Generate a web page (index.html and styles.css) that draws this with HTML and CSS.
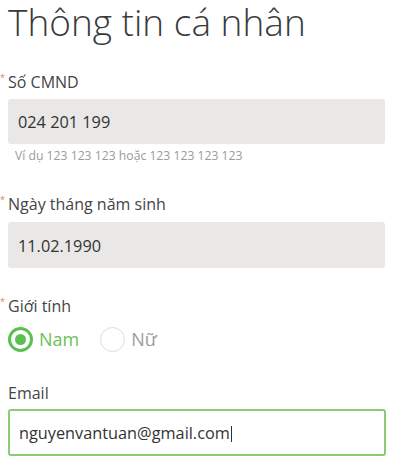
FILE: index.html
```html
<!DOCTYPE html>
<html lang="vi">
<head>
<meta charset="utf-8">
<title>Thông tin cá nhân</title>
<link rel="stylesheet" href="styles.css">
</head>
<body>
<div class="form">
  <h1 class="title">Thông tin cá nhân</h1>

  <div class="label label-1"><span class="req">*</span>Số CMND</div>
  <div class="field field-1">024 201 199</div>
  <div class="hint">Ví dụ 123 123 123 hoặc 123 123 123 123</div>

  <div class="label label-2"><span class="req">*</span>Ngày tháng năm sinh</div>
  <div class="field field-2">11.02.1990</div>

  <div class="label label-3"><span class="req">*</span>Giới tính</div>
  <div class="radios">
    <div class="radio checked"><span class="dot"></span><span class="rtext">Nam</span></div>
    <div class="radio"><span class="dot"></span><span class="rtext">Nữ</span></div>
  </div>

  <div class="label label-4 plain">Email</div>
  <div class="field field-email">nguyenvantuan@gmail.com<span class="caret"></span></div>
</div>
</body>
</html>
```

FILE: styles.css
```css
html, body {
  margin: 0;
  padding: 0;
  background: #ffffff;
}

body {
  font-family: "Open Sans", "Noto Sans", sans-serif;
  color: #333;
}

.form {
  display: flex;
  flex-direction: column;
  align-items: flex-start;
  padding-left: 8px;
}

.title {
  margin: 0;
  font-size: 37px;
  line-height: 44px;
  height: 44px;
  font-weight: 300;
  color: #3a3a3a;
}

.label {
  font-size: 16px;
  line-height: 20px;
  color: #444;
  margin-left: -8px;
  height: 20px;
}

.label.plain {
  margin-left: 0;
}

.req {
  display: inline-block;
  width: 8px;
  font-size: 9px;
  line-height: 9px;
  vertical-align: top;
  color: #e07a6e;
  padding-top: 1px;
}

.label-1 { margin-top: 28px; }
.label-2 { margin-top: 30px; }
.label-3 { margin-top: 28px; }
.label-4 { margin-top: 31px; }

.field {
  box-sizing: border-box;
  width: 377px;
  background: #e9e8e6;
  border-radius: 3px;
  font-size: 16.3px;
  color: #333;
  padding-left: 10px;
}

.field-1 {
  margin-top: 7px;
  height: 45px;
  padding-top: 3px;
  line-height: 41px;
}

.field-2 {
  margin-top: 8px;
  height: 46px;
  padding-top: 3px;
  line-height: 42px;
}

.field-email {
  margin-top: 6px;
  width: 378px;
  height: 47px;
  background: #fff;
  border: 2px solid #8bcb76;
  padding-left: 9px;
  padding-top: 2px;
  line-height: 40px;
}

.caret {
  display: inline-block;
  width: 1px;
  height: 16px;
  background: #333;
  vertical-align: -3px;
  margin-left: 1px;
}

.hint {
  margin-top: 4px;
  margin-left: 7px;
  font-size: 12.2px;
  line-height: 16px;
  color: #9a9a9a;
}

.radios {
  display: flex;
  align-items: center;
  gap: 21px;
  margin-top: 11px;
  height: 25px;
}

.radio {
  display: flex;
  align-items: center;
  gap: 6px;
  font-size: 18px;
  line-height: 25px;
  color: #9c9c9c;
}

.dot {
  box-sizing: border-box;
  width: 25px;
  height: 25px;
  border-radius: 50%;
  border: 1px solid #dedede;
  background: #fff;
  display: flex;
  align-items: center;
  justify-content: center;
}

.radio.checked {
  color: #6cbf5a;
}

.radio.checked .dot {
  border: 3px solid #5cbf4f;
}

.radio.checked .dot::after {
  content: "";
  width: 11px;
  height: 11px;
  border-radius: 50%;
  background: #5cbf4f;
}
```
